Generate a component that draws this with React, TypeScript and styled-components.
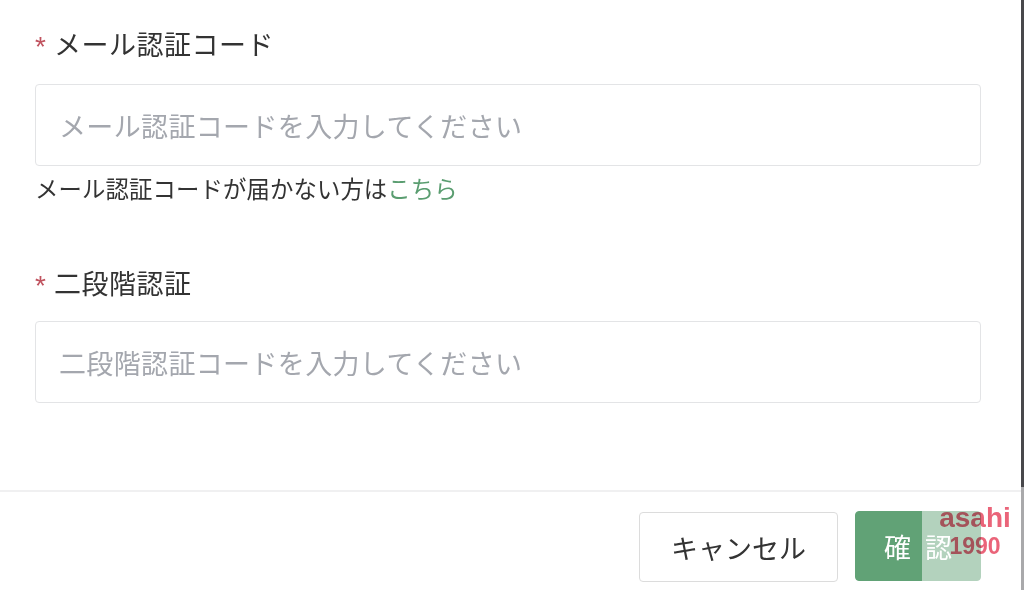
import React from "react";
import styled, { createGlobalStyle } from "styled-components";

const GlobalStyle = createGlobalStyle`
  html, body {
    margin: 0;
    padding: 0;
    background: #ffffff;
  }
  body {
    font-family: "Noto Sans CJK JP", "Noto Sans", sans-serif;
    color: #333333;
  }
  * { box-sizing: border-box; }
`;

const Frame = styled.div`
  position: relative;
  display: flex;
  width: 1024px;
  height: 590px;
  overflow: hidden;
`;

const Main = styled.div`
  flex: 1;
  display: flex;
  flex-direction: column;
  min-width: 0;
`;

const ScrollStrip = styled.div`
  width: 3px;
  display: flex;
  flex-direction: column;
`;

const StripPart = styled.div<{ $dark?: boolean }>`
  height: ${(p) => (p.$dark ? "487px" : "auto")};
  flex: ${(p) => (p.$dark ? "none" : "1")};
  background: ${(p) => (p.$dark ? "#48484b" : "#a9a9ab")};
`;

const Body = styled.div`
  height: 490px;
  padding: 26px 40px 0 35px;
  display: flex;
  flex-direction: column;
`;

const LabelRow = styled.div<{ $top: number }>`
  display: flex;
  align-items: flex-start;
  height: 36px;
  margin-top: ${(p) => p.$top}px;
`;

const Asterisk = styled.span`
  display: block;
  font-family: "Liberation Sans", Arial, sans-serif;
  font-size: 28px;
  line-height: 28px;
  margin-top: 7px;
  margin-right: 8px;
  color: #c0535f;
`;

const LabelText = styled.span`
  font-size: 27px;
  line-height: 36px;
  letter-spacing: 0.5px;
  color: #333333;
`;

const Input = styled.input<{ $top: number }>`
  display: block;
  width: 100%;
  height: 82px;
  margin-top: ${(p) => p.$top}px;
  padding: 0 23px;
  border: 1px solid #e3e4e6;
  border-radius: 4px;
  font-family: "Noto Sans CJK JP", "Noto Sans", sans-serif;
  font-size: 27px;
  letter-spacing: 0.35px;
  color: #333333;
  outline: none;
  background: #fff;
  &::placeholder {
    color: #a4a7ae;
  }
`;

const Helper = styled.div`
  margin-top: 7px;
  font-size: 23.4px;
  line-height: 30px;
  letter-spacing: 0.1px;
  color: #333333;
`;

const Link = styled.a`
  color: #5a9d70;
  text-decoration: none;
`;

const Footer = styled.div`
  flex: 1;
  border-top: 2px solid #f0f0f1;
  padding: 20px 40px 0 0;
  display: flex;
  justify-content: flex-end;
  align-items: flex-start;
  gap: 17px;
`;

const Button = styled.button<{ $primary?: boolean }>`
  height: 70px;
  width: ${(p) => (p.$primary ? "126px" : "199px")};
  border-radius: 4px;
  border: 1px solid ${(p) => (p.$primary ? "#61a276" : "#dcdcdc")};
  background: ${(p) => (p.$primary ? "#61a276" : "#ffffff")};
  color: ${(p) => (p.$primary ? "#ffffff" : "#333333")};
  font-family: "Noto Sans CJK JP", "Noto Sans", sans-serif;
  font-size: 27px;
  display: flex;
  align-items: center;
  justify-content: center;
  gap: 14px;
  padding: 0;
  margin-top: ${(p) => (p.$primary ? "-1px" : "0")};
  cursor: pointer;
`;

const Watermark = styled.div`
  position: absolute;
  left: 922px;
  top: 500px;
  width: 98px;
  height: 90px;
  background: rgba(255, 255, 255, 0.52);
  pointer-events: none;
`;

const WatermarkText = styled.div`
  position: absolute;
  left: 926px;
  top: 503px;
  width: 98px;
  display: flex;
  flex-direction: column;
  align-items: center;
  font-family: "Liberation Sans", Arial, sans-serif;
  font-weight: 700;
  color: #ea6479;
  mix-blend-mode: multiply;
  pointer-events: none;
`;

const WatermarkLine = styled.span<{ $size: number; $height: number }>`
  font-size: ${(p) => p.$size}px;
  line-height: ${(p) => p.$height}px;
`;

export default function App() {
  return (
    <>
      <GlobalStyle />
      <Frame>
        <Main>
          <Body>
            <LabelRow $top={0}>
              <Asterisk>*</Asterisk>
              <LabelText>メール認証コード</LabelText>
            </LabelRow>
            <Input $top={22} placeholder="メール認証コードを入力してください" />
            <Helper>
              メール認証コードが届かない方は<Link href="#">こちら</Link>
            </Helper>
            <LabelRow $top={62}>
              <Asterisk>*</Asterisk>
              <LabelText>二段階認証</LabelText>
            </LabelRow>
            <Input $top={20} placeholder="二段階認証コードを入力してください" />
          </Body>
          <Footer>
            <Button>キャンセル</Button>
            <Button $primary>
              <span>確</span>
              <span>認</span>
            </Button>
          </Footer>
        </Main>
        <ScrollStrip>
          <StripPart $dark />
          <StripPart />
        </ScrollStrip>
        <Watermark />
        <WatermarkText>
          <WatermarkLine $size={28} $height={30}>
            asahi
          </WatermarkLine>
          <WatermarkLine $size={23} $height={26}>
            1990
          </WatermarkLine>
        </WatermarkText>
      </Frame>
    </>
  );
}
